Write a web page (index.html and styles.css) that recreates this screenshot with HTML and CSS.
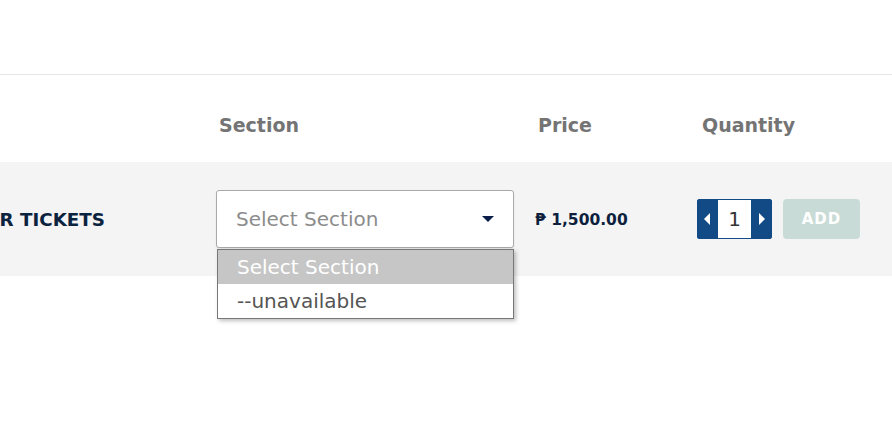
FILE: index.html
```html
<!DOCTYPE html>
<html lang="en">
<head>
  <meta charset="UTF-8" />
  <title>Tickets</title>
  <link rel="stylesheet" href="styles.css">
</head>
<body>

  <div class="topbar"></div>

  <section class="tickets">
    <div class="ticket-head">
      <div class="col-name"></div>
      <div class="col-section">Section</div>
      <div class="col-price">Price</div>
      <div class="col-qty">Quantity</div>
    </div>

    <div class="ticket-row">
      <div class="col-name"><span class="ticket-name">REGULAR TICKETS</span></div>

      <div class="col-section">
        <div class="picker">
          <div class="select">
            <span>Select Section</span>
            <svg class="caret" width="12" height="6" viewBox="0 0 12 6"><path d="M0 0H12L6 6Z" fill="#0b1d4a"/></svg>
          </div>
          <!-- open dropdown list -->
          <ul class="options">
            <li class="active">Select Section</li>
            <li>--unavailable</li>
          </ul>
        </div>
      </div>

      <div class="col-price"><span class="price">&#8369; 1,500.00</span></div>

      <div class="col-qty">
        <div class="qty">
          <button class="qty-btn"><svg width="6" height="12" viewBox="0 0 6 12"><path d="M6 0V12L0 6Z" fill="#fff"/></svg></button>
          <input class="qty-input" type="text" value="1">
          <button class="qty-btn"><svg width="6" height="12" viewBox="0 0 6 12"><path d="M0 0V12L6 6Z" fill="#fff"/></svg></button>
        </div>
        <button class="add-btn" disabled>ADD</button>
      </div>
    </div>
  </section>

</body>
</html>
```

FILE: styles.css
```css
body {
  font-family: "DejaVu Sans", sans-serif;
  background: #fff;
  color: #333;
  margin: 0;
  padding: 0;
}

.topbar {
  height: 74px;
  border-bottom: 1px solid #e6e6e6;
}

.tickets {
  padding-bottom: 155px;
}

.ticket-head,
.ticket-row {
  display: grid;
  grid-template-columns: 216px 319px 162px 1fr;
  align-items: center;
}

.ticket-head {
  padding: 38px 0 24px;
  line-height: 25px;
  font-size: 19px;
  font-weight: bold;
  color: #747474;
}

.ticket-head .col-section,
.ticket-head .col-price {
  padding-left: 3px;
}

.ticket-head .col-qty {
  padding-left: 5px;
}

.ticket-row {
  background: #f4f4f4;
  height: 114px;
}

.ticket-row .col-name {
  display: flex;
  justify-content: flex-end;
  overflow: hidden;
  white-space: nowrap;
  padding-right: 111px;
}

.ticket-name {
  font-size: 18.3px;
  font-weight: bold;
  color: #0c2340;
}

.picker {
  position: relative;
  width: 298px;
}

.select {
  box-sizing: border-box;
  height: 58px;
  background: #fff;
  border: 1px solid #a9a9a9;
  border-radius: 3px;
  display: flex;
  align-items: center;
  justify-content: space-between;
  padding: 0 19px 0 19px;
  font-size: 20px;
  color: #8c8c8c;
  box-shadow: 0 1px 2px rgba(0,0,0,0.08);
}

.caret {
  display: block;
}

.options {
  position: absolute;
  top: 100%;
  left: 1px;
  width: 297px;
  box-sizing: border-box;
  margin: 1px 0 0;
  padding: 0;
  list-style: none;
  background: #fff;
  border: 1px solid #777;
  box-shadow: 2px 2px 4px rgba(0,0,0,0.25);
  font-size: 20px;
  z-index: 10;
}

.options li {
  height: 34px;
  line-height: 34px;
  padding-left: 19px;
  color: #555;
}

.options li.active {
  background: #c6c6c6;
  color: #fff;
}

.price {
  font-size: 15.5px;
  font-weight: bold;
  color: #0d1f3d;
}

.col-qty {
  display: flex;
  align-items: center;
  gap: 11px;
}

.qty {
  display: flex;
  height: 40px;
  background: #124a85;
  border-radius: 3px;
  overflow: hidden;
}

.qty-btn {
  width: 20px;
  border: none;
  padding: 0;
  background: #124a85;
  display: flex;
  align-items: center;
  justify-content: center;
  cursor: pointer;
}

.qty-input {
  width: 35px;
  box-sizing: border-box;
  border: 1px solid #124a85;
  margin: 0;
  padding: 0;
  text-align: center;
  font-family: "DejaVu Sans", sans-serif;
  font-size: 20px;
  color: #333;
  background: #fff;
  outline: none;
}

.add-btn {
  width: 77px;
  height: 40px;
  border: none;
  border-radius: 4px;
  background: #c8dbd6;
  color: #fff;
  font-family: "DejaVu Sans", sans-serif;
  font-size: 15px;
  font-weight: bold;
  letter-spacing: 1px;
  cursor: not-allowed;
}
```
